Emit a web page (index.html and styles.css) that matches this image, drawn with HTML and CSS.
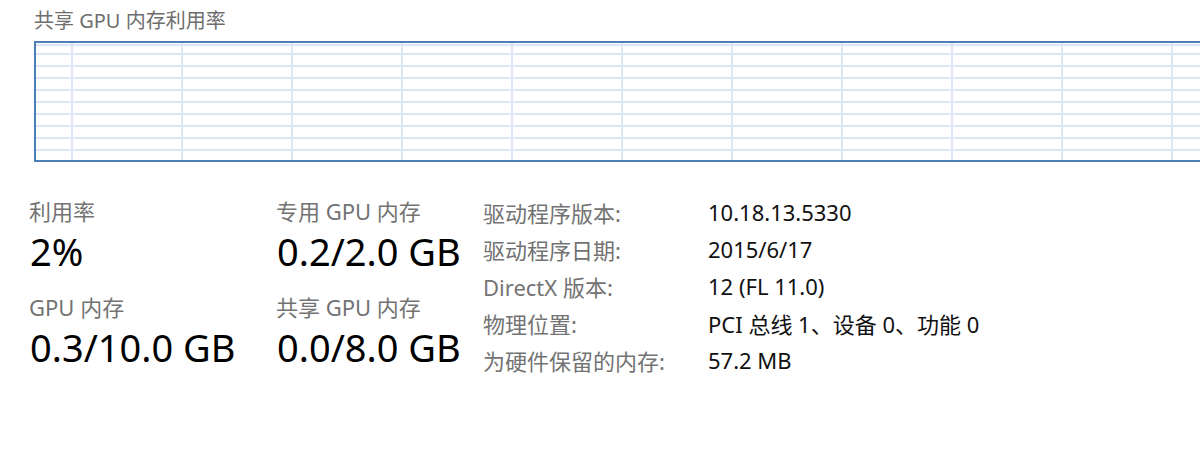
FILE: index.html
```html
<!DOCTYPE html>
<html lang="zh-CN">
<head>
    <meta charset="UTF-8">
    <title>GPU</title>
    <link rel="stylesheet" href="styles.css">
</head>
<body>
<div id="page">
    <div class="title">共享 GPU 内存利用率</div>
    <div class="chart"></div>

    <div class="stats">
        <div class="blocks">
            <div class="block">
                <div class="label">利用率</div>
                <div class="value">2%</div>
            </div>
            <div class="block">
                <div class="label">专用 GPU 内存</div>
                <div class="value">0.2/2.0 GB</div>
            </div>
            <div class="block">
                <div class="label">GPU 内存</div>
                <div class="value">0.3/10.0 GB</div>
            </div>
            <div class="block">
                <div class="label">共享 GPU 内存</div>
                <div class="value">0.0/8.0 GB</div>
            </div>
        </div>

        <div class="info">
            <span class="key">驱动程序版本:</span>
            <span class="val">10.18.13.5330</span>
            <span class="key">驱动程序日期:</span>
            <span class="val">2015/6/17</span>
            <span class="key">DirectX 版本:</span>
            <span class="val">12 (FL 11.0)</span>
            <span class="key">物理位置:</span>
            <span class="val">PCI 总线 1、设备 0、功能 0</span>
            <span class="key">为硬件保留的内存:</span>
            <span class="val">57.2 MB</span>
        </div>
    </div>
</div>
</body>
</html>
```

FILE: styles.css
```css
html, body {
    margin: 0;
    padding: 0;
    background: #fff;
    overflow: hidden;
}

body {
    font-family: "Noto Sans", "Noto Sans CJK SC", sans-serif;
    width: 1200px;
    height: 463px;
}

#page {
    padding-top: 6px;
}

.title {
    margin-left: 34px;
    font-size: 20px;
    line-height: 30px;
    color: #6e6e6e;
}

/* graph area, runs past the right edge */
.chart {
    margin-top: 5px;
    margin-left: 34px;
    width: 1180px;
    height: 121px;
    box-sizing: border-box;
    border: 2px solid #4d7fb6;
    background-color: #fff;
    background-image:
        repeating-linear-gradient(to right, transparent 0 35px, #dde7f3 35px 37px, transparent 37px 110px),
        repeating-linear-gradient(to bottom, #dde7f3 0 2px, transparent 2px 12px);
    background-position: 0 0, 0 10px;
}

.stats {
    display: flex;
    margin-top: 34px;
}

.blocks {
    display: grid;
    grid-template-columns: 247px 207px;
    row-gap: 10px;
    padding-left: 29px;
}

.label {
    font-size: 22px;
    line-height: 30px;
    color: #737373;
}

.value {
    font-size: 38px;
    line-height: 50px;
    color: #000;
    padding-left: 1px;
}

.info {
    display: grid;
    grid-template-columns: 225px auto;
    grid-auto-rows: 37px;
    align-items: center;
    margin-top: -3px;
    font-size: 22px;
}

.key {
    color: #737373;
}

.val {
    color: #111;
}
```
